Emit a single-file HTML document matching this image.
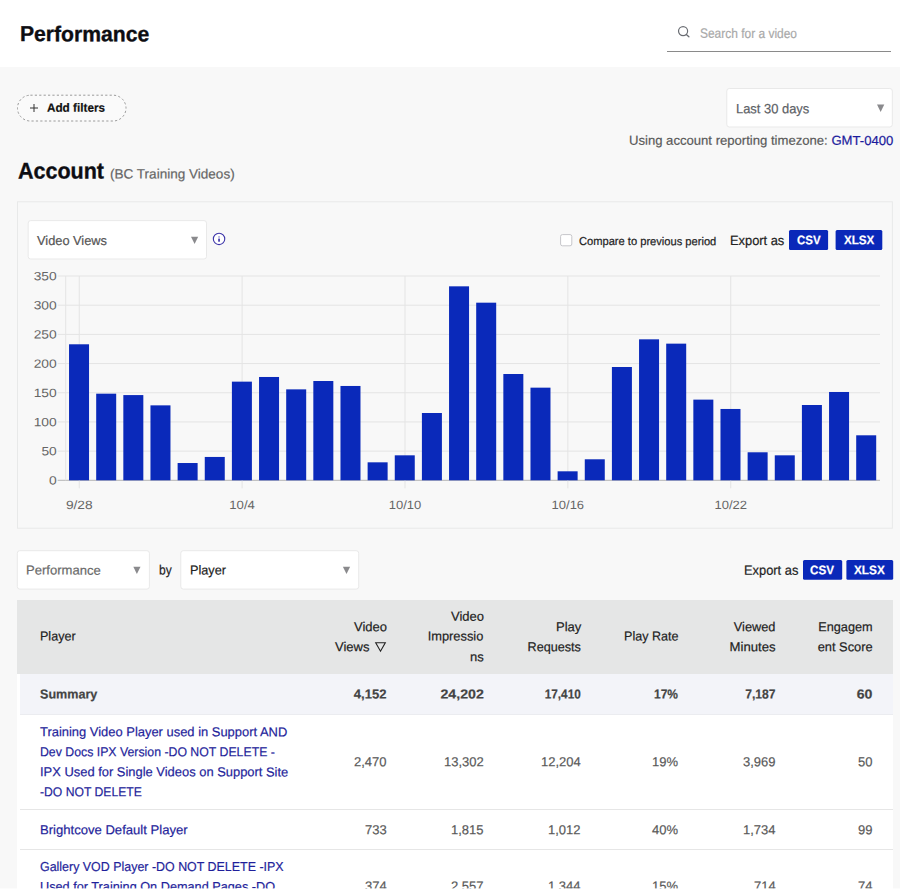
<!DOCTYPE html>
<html lang="en">
<head>
<meta charset="utf-8">
<title>Performance</title>
<style>
*{box-sizing:border-box;margin:0;padding:0}
html,body{width:900px;height:891px;overflow:hidden}
body{position:relative;background:#f8f8f8;font-family:"Liberation Sans",Arial,sans-serif;color:#222;font-size:13px}
.abs{position:absolute}
.x{position:absolute;white-space:nowrap;transform-origin:0 0;-webkit-text-stroke:.2px currentColor}
.x a{color:#1b1b9c;text-decoration:none}
#hdr{position:absolute;left:0;top:0;width:900px;height:67px;background:#fff}
#sline{position:absolute;left:667px;top:51px;width:224px;height:1px;background:#8a8a8a}
#tbl{position:absolute;left:17px;top:600px;width:876px;height:291px;background:#fff}
#th{position:absolute;left:0;top:0;width:876px;height:74px;background:#e5e6e6}
#sum{position:absolute;left:3px;top:74px;width:873px;height:41px;background:#f3f4f9}
.hl{position:absolute;left:3px;width:873px;height:1px;background:#e6e6e6}
#fade{position:absolute;left:0;top:888px;width:900px;height:3px;background:linear-gradient(rgba(255,255,255,.6) 0,rgba(255,255,255,.6) 1px,#fff 1px)}
</style>
</head>
<body>
<div id="hdr">
  <svg class="abs" style="left:676px;top:24px" width="16" height="16" viewBox="0 0 16 16"><circle cx="7.07" cy="7.1" r="4.55" fill="none" stroke="#6a6d73" stroke-width="1.2"/><path d="M10.3 10.4 L12.9 12.8" stroke="#6a6d73" stroke-width="1.3" stroke-linecap="round"/></svg>
  <div id="sline"></div>
</div>

<svg class="abs" style="left:16px;top:94px" width="112" height="28" viewBox="0 0 112 28"><rect x="1.5" y="1.2" width="108.5" height="25.8" rx="12.9" fill="#fafafa" stroke="#9a9a9a" stroke-width="1" stroke-dasharray="2.2 2.2"/></svg>
<svg class="abs" style="left:29px;top:103px" width="10" height="10" viewBox="0 0 10 10"><path d="M5 1v8M1 5h8" stroke="#333" stroke-width="1"/></svg>



<svg class="abs" style="left:0;top:0" width="900" height="891" viewBox="0 0 900 891"><rect x="17.50" y="201.80" width="874.90" height="326.40" rx="0" fill="none" stroke="#e8e9e9" stroke-width="1"/>
<rect x="726.80" y="88.50" width="165.50" height="38.50" rx="2.5" fill="#fff" stroke="#e9e9e9" stroke-width="1"/>
<path d="M877.00 104.60h7.30l-3.65 7.40z" fill="#8a8a8d"/>
<rect x="28.20" y="220.60" width="178.30" height="38.40" rx="2.5" fill="#fff" stroke="#e9e9e9" stroke-width="1"/>
<path d="M191.00 236.70h7.20l-3.60 7.20z" fill="#8a8a8d"/>
<rect x="17.30" y="550.70" width="132.10" height="38.40" rx="2.5" fill="#fff" stroke="#e9e9e9" stroke-width="1"/>
<path d="M133.30 566.80h7.20l-3.60 7.20z" fill="#8a8a8d"/>
<rect x="180.80" y="550.70" width="177.90" height="38.40" rx="2.5" fill="#fff" stroke="#e9e9e9" stroke-width="1"/>
<path d="M342.90 566.80h7.20l-3.60 7.20z" fill="#8a8a8d"/>
<rect x="560.60" y="234.60" width="11.20" height="11.20" rx="1.8" fill="#fff" stroke="#c6c6ca" stroke-width="1"/>
<rect x="789.00" y="230.00" width="39.10" height="19.90" rx="1.5" fill="#0a28b9"/>
<rect x="835.60" y="230.00" width="46.70" height="19.90" rx="1.5" fill="#0a28b9"/>
<rect x="803.00" y="560.00" width="39.20" height="19.80" rx="1.5" fill="#0a28b9"/>
<rect x="846.40" y="560.00" width="46.80" height="19.80" rx="1.5" fill="#0a28b9"/>
<circle cx="219.05" cy="238.9" r="5.7" fill="#fff" stroke="#3d35a9" stroke-width="1.1"/>
<rect x="218.2" y="238.6" width="1.7" height="3.1" fill="#3d35a9"/>
<rect x="218.2" y="236.3" width="1.7" height="1.3" fill="#3d35a9" opacity=".55"/></svg>
<svg id="chart" class="abs" style="left:0;top:260px" width="900" height="265" viewBox="0 260 900 265" font-family="'Liberation Sans',Arial,sans-serif" font-size="12" fill="#666"><rect x="57.7" y="479.80" width="822.3" height="1" fill="#b5b5b5"/>
<text x="49.0" y="484.50" transform="rotate(.05 49.0 484.50)" textLength="7.7" lengthAdjust="spacingAndGlyphs">0</text>
<rect x="57.7" y="450.61" width="822.3" height="1" fill="#e4e4e4"/>
<text x="41.4" y="455.31" transform="rotate(.05 41.4 455.31)" textLength="15.3" lengthAdjust="spacingAndGlyphs">50</text>
<rect x="57.7" y="421.43" width="822.3" height="1" fill="#e4e4e4"/>
<text x="33.7" y="426.13" transform="rotate(.05 33.7 426.13)" textLength="23.0" lengthAdjust="spacingAndGlyphs">100</text>
<rect x="57.7" y="392.24" width="822.3" height="1" fill="#e4e4e4"/>
<text x="33.7" y="396.94" transform="rotate(.05 33.7 396.94)" textLength="23.0" lengthAdjust="spacingAndGlyphs">150</text>
<rect x="57.7" y="363.06" width="822.3" height="1" fill="#e4e4e4"/>
<text x="33.7" y="367.76" transform="rotate(.05 33.7 367.76)" textLength="23.0" lengthAdjust="spacingAndGlyphs">200</text>
<rect x="57.7" y="333.87" width="822.3" height="1" fill="#e4e4e4"/>
<text x="33.7" y="338.57" transform="rotate(.05 33.7 338.57)" textLength="23.0" lengthAdjust="spacingAndGlyphs">250</text>
<rect x="57.7" y="304.69" width="822.3" height="1" fill="#e4e4e4"/>
<text x="33.7" y="309.39" transform="rotate(.05 33.7 309.39)" textLength="23.0" lengthAdjust="spacingAndGlyphs">300</text>
<rect x="57.7" y="275.50" width="822.3" height="1" fill="#e4e4e4"/>
<text x="33.7" y="280.20" transform="rotate(.05 33.7 280.20)" textLength="23.0" lengthAdjust="spacingAndGlyphs">350</text>
<rect x="65.20" y="276.0" width="1" height="204.3" fill="#e4e4e4"/>
<rect x="78.77" y="276.0" width="1" height="212.3" fill="#e4e4e4"/>
<text x="65.9" y="508.9" transform="rotate(.05 65.9 508.9)" textLength="26.7" lengthAdjust="spacingAndGlyphs">9/28</text>
<rect x="241.63" y="276.0" width="1" height="212.3" fill="#e4e4e4"/>
<text x="229.3" y="508.9" transform="rotate(.05 229.3 508.9)" textLength="25.6" lengthAdjust="spacingAndGlyphs">10/4</text>
<rect x="404.49" y="276.0" width="1" height="212.3" fill="#e4e4e4"/>
<text x="388.7" y="508.9" transform="rotate(.05 388.7 508.9)" textLength="32.5" lengthAdjust="spacingAndGlyphs">10/10</text>
<rect x="567.35" y="276.0" width="1" height="212.3" fill="#e4e4e4"/>
<text x="551.6" y="508.9" transform="rotate(.05 551.6 508.9)" textLength="32.5" lengthAdjust="spacingAndGlyphs">10/16</text>
<rect x="730.21" y="276.0" width="1" height="212.3" fill="#e4e4e4"/>
<text x="714.5" y="508.9" transform="rotate(.05 714.5 508.9)" textLength="32.5" lengthAdjust="spacingAndGlyphs">10/22</text>
<rect x="69.04" y="344.29" width="20.00" height="136.01" fill="#0a29ba"/>
<rect x="96.19" y="393.68" width="20.00" height="86.62" fill="#0a29ba"/>
<rect x="123.33" y="395.08" width="20.00" height="85.22" fill="#0a29ba"/>
<rect x="150.47" y="405.35" width="20.00" height="74.95" fill="#0a29ba"/>
<rect x="177.62" y="463.02" width="20.00" height="17.28" fill="#0a29ba"/>
<rect x="204.76" y="456.95" width="20.00" height="23.35" fill="#0a29ba"/>
<rect x="231.90" y="381.65" width="20.00" height="98.65" fill="#0a29ba"/>
<rect x="259.05" y="376.98" width="20.00" height="103.32" fill="#0a29ba"/>
<rect x="286.19" y="389.36" width="20.00" height="90.94" fill="#0a29ba"/>
<rect x="313.33" y="381.01" width="20.00" height="99.29" fill="#0a29ba"/>
<rect x="340.48" y="385.97" width="20.00" height="94.33" fill="#0a29ba"/>
<rect x="367.62" y="462.32" width="20.00" height="17.98" fill="#0a29ba"/>
<rect x="394.76" y="455.32" width="20.00" height="24.98" fill="#0a29ba"/>
<rect x="421.91" y="413.00" width="20.00" height="67.30" fill="#0a29ba"/>
<rect x="449.05" y="286.33" width="20.00" height="193.97" fill="#0a29ba"/>
<rect x="476.19" y="302.68" width="20.00" height="177.62" fill="#0a29ba"/>
<rect x="503.34" y="374.01" width="20.00" height="106.29" fill="#0a29ba"/>
<rect x="530.48" y="387.66" width="20.00" height="92.64" fill="#0a29ba"/>
<rect x="557.62" y="471.31" width="20.00" height="8.99" fill="#0a29ba"/>
<rect x="584.77" y="459.29" width="20.00" height="21.01" fill="#0a29ba"/>
<rect x="611.91" y="367.00" width="20.00" height="113.30" fill="#0a29ba"/>
<rect x="639.05" y="339.33" width="20.00" height="140.97" fill="#0a29ba"/>
<rect x="666.20" y="343.65" width="20.00" height="136.65" fill="#0a29ba"/>
<rect x="693.34" y="399.63" width="20.00" height="80.67" fill="#0a29ba"/>
<rect x="720.48" y="408.97" width="20.00" height="71.33" fill="#0a29ba"/>
<rect x="747.63" y="452.28" width="20.00" height="28.02" fill="#0a29ba"/>
<rect x="774.77" y="455.32" width="20.00" height="24.98" fill="#0a29ba"/>
<rect x="801.91" y="405.00" width="20.00" height="75.30" fill="#0a29ba"/>
<rect x="829.06" y="391.98" width="20.00" height="88.32" fill="#0a29ba"/>
<rect x="856.20" y="435.30" width="20.00" height="45.00" fill="#0a29ba"/>
<rect x="57.7" y="479.80" width="822.3" height="1" fill="#b0b0b0" opacity=".0"/></svg>


<div id="tbl">
  <div id="th"></div>
  <div id="sum"></div>
  <div class="hl" style="top:114px;background:#ebecf0"></div>
  <div class="hl" style="top:209px"></div>
  <div class="hl" style="top:249px"></div>
</div>
<svg class="abs" style="left:374px;top:640.5px" width="14" height="12" viewBox="0 0 14 12"><path d="M1.7 1.8h9.6L6.5 10.2z" fill="none" stroke="#222" stroke-width="1.1" stroke-linejoin="miter"/></svg>

<div id="txt" style="position:absolute;left:0;top:0;width:900px;height:891px;opacity:.999">
<div class="x" style="top:21px;font-size:21.5px;line-height:26px;color:#0d0d12;font-weight:700;left:20.00px;transform:translateY(0.10px) rotate(.05deg) scaleX(0.9836);-webkit-text-stroke:0.35px #0d0d12;">Performance</div>
<div class="x" style="top:25px;font-size:13.5px;line-height:16px;color:#a9a9a9;left:700.30px;transform:translateY(0.86px) rotate(.05deg) scaleX(0.8853);">Search for a video</div>
<div class="x" style="top:100px;font-size:12px;line-height:14px;color:#111;font-weight:700;left:47.00px;transform:translateY(0.80px) rotate(.05deg) scaleX(0.9774);">Add filters</div>
<div class="x" style="top:101px;font-size:13.4px;line-height:16px;color:#5c5f66;left:735.50px;transform:translateY(0.18px) rotate(.05deg) scaleX(0.9653);">Last 30 days</div>
<div class="x" style="top:132px;font-size:13px;line-height:16px;color:#5a5a5a;left:628.50px;transform:translateY(0.68px) rotate(.05deg) scaleX(1.0076);">Using account reporting timezone: <a>GMT-0400</a></div>
<div class="x" style="top:157px;font-size:22.6px;line-height:27px;color:#0d0d12;font-weight:700;left:17.70px;transform:translateY(0.40px) rotate(.05deg) scaleX(0.9516);-webkit-text-stroke:0.35px #0d0d12;">Account</div>
<div class="x" style="top:166px;font-size:13.5px;line-height:16px;color:#666;left:110.00px;transform:translateY(0.46px) rotate(.05deg) scaleX(1.0031);">(BC Training Videos)</div>
<div class="x" style="top:232px;font-size:13px;line-height:16px;color:#555;left:37.00px;transform:translateY(0.88px) rotate(.05deg) scaleX(0.9848);">Video Views</div>
<div class="x" style="top:234px;font-size:11.5px;line-height:14px;color:#222;left:578.70px;transform:translateY(0.07px) rotate(.05deg) scaleX(0.9674);">Compare to previous period</div>
<div class="x" style="top:232px;font-size:13.4px;line-height:16px;color:#222;left:730.30px;transform:translateY(0.88px) rotate(.05deg) scaleX(0.9597);">Export as</div>
<div class="x" style="top:233px;font-size:12.4px;line-height:15px;color:#fff;font-weight:700;left:796.50px;transform:translateY(0.34px) rotate(.05deg) scaleX(0.9261);">CSV</div>
<div class="x" style="top:233px;font-size:12.4px;line-height:15px;color:#fff;font-weight:700;left:843.60px;transform:translateY(0.34px) rotate(.05deg) scaleX(0.9390);">XLSX</div>
<div class="x" style="top:562px;font-size:13px;line-height:16px;color:#6a6a6a;left:26.20px;transform:translateY(0.58px) rotate(.05deg) scaleX(1.0037);">Performance</div>
<div class="x" style="top:562px;font-size:13.4px;line-height:16px;color:#222;left:158.50px;transform:translateY(0.38px) rotate(.05deg) scaleX(0.8971);">by</div>
<div class="x" style="top:562px;font-size:13px;line-height:16px;color:#222;left:189.80px;transform:translateY(0.58px) rotate(.05deg) scaleX(0.9767);">Player</div>
<div class="x" style="top:562px;font-size:13.4px;line-height:16px;color:#222;left:743.60px;transform:translateY(0.68px) rotate(.05deg) scaleX(0.9615);">Export as</div>
<div class="x" style="top:563px;font-size:12.4px;line-height:15px;color:#fff;font-weight:700;left:810.40px;transform:translateY(0.34px) rotate(.05deg) scaleX(0.9418);">CSV</div>
<div class="x" style="top:563px;font-size:12.4px;line-height:15px;color:#fff;font-weight:700;left:854.40px;transform:translateY(0.34px) rotate(.05deg) scaleX(0.9514);">XLSX</div>
<div class="x" style="top:628px;font-size:13px;line-height:16px;color:#222;left:40.40px;transform:translateY(0.58px) rotate(.05deg) scaleX(0.9658);">Player</div>
<div class="x" style="top:619px;font-size:13px;line-height:16px;color:#222;right:513.30px;transform-origin:100% 0;transform:translateY(0.18px) rotate(.05deg);">Video</div>
<div class="x" style="top:639px;font-size:13px;line-height:16px;color:#222;left:335.30px;transform:translateY(0.18px) rotate(.05deg);">Views</div>
<div class="x" style="top:608px;font-size:13px;line-height:16px;color:#222;right:416.30px;transform-origin:100% 0;transform:translateY(0.88px) rotate(.05deg);">Video</div>
<div class="x" style="top:628px;font-size:13px;line-height:16px;color:#222;right:416.30px;transform-origin:100% 0;transform:translateY(0.58px) rotate(.05deg) scaleX(0.9883);">Impressio</div>
<div class="x" style="top:649px;font-size:13px;line-height:16px;color:#222;right:416.30px;transform-origin:100% 0;transform:translateY(0.18px) rotate(.05deg);">ns</div>
<div class="x" style="top:619px;font-size:13px;line-height:16px;color:#222;right:319.00px;transform-origin:100% 0;transform:translateY(0.18px) rotate(.05deg);">Play</div>
<div class="x" style="top:639px;font-size:13px;line-height:16px;color:#222;right:319.00px;transform-origin:100% 0;transform:translateY(0.18px) rotate(.05deg) scaleX(0.9705);">Requests</div>
<div class="x" style="top:628px;font-size:13px;line-height:16px;color:#222;right:221.70px;transform-origin:100% 0;transform:translateY(0.58px) rotate(.05deg) scaleX(0.9632);">Play Rate</div>
<div class="x" style="top:619px;font-size:13px;line-height:16px;color:#222;right:124.70px;transform-origin:100% 0;transform:translateY(0.18px) rotate(.05deg) scaleX(0.9810);">Viewed</div>
<div class="x" style="top:639px;font-size:13px;line-height:16px;color:#222;right:124.70px;transform-origin:100% 0;transform:translateY(0.18px) rotate(.05deg) scaleX(1.0103);">Minutes</div>
<div class="x" style="top:619px;font-size:13px;line-height:16px;color:#222;right:27.30px;transform-origin:100% 0;transform:translateY(0.18px) rotate(.05deg) scaleX(0.9774);">Engagem</div>
<div class="x" style="top:639px;font-size:13px;line-height:16px;color:#222;right:27.30px;transform-origin:100% 0;transform:translateY(0.18px) rotate(.05deg) scaleX(0.9882);">ent Score</div>
<div class="x" style="top:686px;font-size:13px;line-height:16px;color:#444;font-weight:700;left:40.40px;transform:translateY(0.52px) rotate(.05deg) scaleX(0.9671);">Summary</div>
<div class="x" style="top:686px;font-size:13px;line-height:16px;color:#444;font-weight:700;right:513.30px;transform-origin:100% 0;transform:translateY(0.52px) rotate(.05deg) scaleX(1.0047);">4,152</div>
<div class="x" style="top:686px;font-size:13px;line-height:16px;color:#444;font-weight:700;right:416.30px;transform-origin:100% 0;transform:translateY(0.52px) rotate(.05deg) scaleX(1.0889);">24,202</div>
<div class="x" style="top:686px;font-size:13px;line-height:16px;color:#444;font-weight:700;right:319.00px;transform-origin:100% 0;transform:translateY(0.52px) rotate(.05deg) scaleX(0.9053);">17,410</div>
<div class="x" style="top:686px;font-size:13px;line-height:16px;color:#444;font-weight:700;right:222.00px;transform-origin:100% 0;transform:translateY(0.52px) rotate(.05deg) scaleX(0.9220);">17%</div>
<div class="x" style="top:686px;font-size:13px;line-height:16px;color:#444;font-weight:700;right:124.70px;transform-origin:100% 0;transform:translateY(0.52px) rotate(.05deg) scaleX(0.9310);">7,187</div>
<div class="x" style="top:686px;font-size:13px;line-height:16px;color:#444;font-weight:700;right:27.30px;transform-origin:100% 0;transform:translateY(0.52px) rotate(.05deg) scaleX(1.0851);">60</div>
<div class="x" style="top:724px;font-size:13px;line-height:16px;color:#1f1f9b;left:40.40px;transform:translateY(0.18px) rotate(.05deg) scaleX(0.9948);">Training Video Player used in Support AND</div>
<div class="x" style="top:744px;font-size:13px;line-height:16px;color:#1f1f9b;left:40.40px;transform:translateY(0.18px) rotate(.05deg) scaleX(0.9461);">Dev Docs IPX Version -DO NOT DELETE -</div>
<div class="x" style="top:764px;font-size:13px;line-height:16px;color:#1f1f9b;left:40.40px;transform:translateY(0.18px) rotate(.05deg) scaleX(0.9939);">IPX Used for Single Videos on Support Site</div>
<div class="x" style="top:784px;font-size:13px;line-height:16px;color:#1f1f9b;left:40.40px;transform:translateY(0.18px) rotate(.05deg) scaleX(0.9362);">-DO NOT DELETE</div>
<div class="x" style="top:822px;font-size:13px;line-height:16px;color:#1f1f9b;left:40.40px;transform:translateY(0.18px) rotate(.05deg) scaleX(1.0062);">Brightcove Default Player</div>
<div class="x" style="top:858px;font-size:13px;line-height:16px;color:#1f1f9b;left:40.40px;transform:translateY(0.88px) rotate(.05deg) scaleX(0.9562);">Gallery VOD Player -DO NOT DELETE -IPX</div>
<div class="x" style="top:878px;font-size:13px;line-height:16px;color:#1f1f9b;left:40.40px;transform:translateY(0.88px) rotate(.05deg) scaleX(0.9771);">Used for Training On Demand Pages -DO</div>
<div class="x" style="top:754px;font-size:13px;line-height:16px;color:#5a5a5a;right:513.30px;transform-origin:100% 0;transform:translateY(0.18px) rotate(.05deg);">2,470</div>
<div class="x" style="top:754px;font-size:13px;line-height:16px;color:#5a5a5a;right:416.30px;transform-origin:100% 0;transform:translateY(0.18px) rotate(.05deg);">13,302</div>
<div class="x" style="top:754px;font-size:13px;line-height:16px;color:#5a5a5a;right:319.00px;transform-origin:100% 0;transform:translateY(0.18px) rotate(.05deg);">12,204</div>
<div class="x" style="top:754px;font-size:13px;line-height:16px;color:#5a5a5a;right:222.00px;transform-origin:100% 0;transform:translateY(0.18px) rotate(.05deg);">19%</div>
<div class="x" style="top:754px;font-size:13px;line-height:16px;color:#5a5a5a;right:124.70px;transform-origin:100% 0;transform:translateY(0.18px) rotate(.05deg);">3,969</div>
<div class="x" style="top:754px;font-size:13px;line-height:16px;color:#5a5a5a;right:27.30px;transform-origin:100% 0;transform:translateY(0.18px) rotate(.05deg);">50</div>
<div class="x" style="top:822px;font-size:13px;line-height:16px;color:#5a5a5a;right:513.30px;transform-origin:100% 0;transform:translateY(0.18px) rotate(.05deg);">733</div>
<div class="x" style="top:822px;font-size:13px;line-height:16px;color:#5a5a5a;right:416.30px;transform-origin:100% 0;transform:translateY(0.18px) rotate(.05deg);">1,815</div>
<div class="x" style="top:822px;font-size:13px;line-height:16px;color:#5a5a5a;right:319.00px;transform-origin:100% 0;transform:translateY(0.18px) rotate(.05deg);">1,012</div>
<div class="x" style="top:822px;font-size:13px;line-height:16px;color:#5a5a5a;right:222.00px;transform-origin:100% 0;transform:translateY(0.18px) rotate(.05deg);">40%</div>
<div class="x" style="top:822px;font-size:13px;line-height:16px;color:#5a5a5a;right:124.70px;transform-origin:100% 0;transform:translateY(0.18px) rotate(.05deg);">1,734</div>
<div class="x" style="top:822px;font-size:13px;line-height:16px;color:#5a5a5a;right:27.30px;transform-origin:100% 0;transform:translateY(0.18px) rotate(.05deg);">99</div>
<div class="x" style="top:878px;font-size:13px;line-height:16px;color:#5a5a5a;right:513.30px;transform-origin:100% 0;transform:translateY(0.48px) rotate(.05deg);">374</div>
<div class="x" style="top:878px;font-size:13px;line-height:16px;color:#5a5a5a;right:416.30px;transform-origin:100% 0;transform:translateY(0.48px) rotate(.05deg);">2,557</div>
<div class="x" style="top:878px;font-size:13px;line-height:16px;color:#5a5a5a;right:319.00px;transform-origin:100% 0;transform:translateY(0.48px) rotate(.05deg);">1,344</div>
<div class="x" style="top:878px;font-size:13px;line-height:16px;color:#5a5a5a;right:222.00px;transform-origin:100% 0;transform:translateY(0.48px) rotate(.05deg);">15%</div>
<div class="x" style="top:878px;font-size:13px;line-height:16px;color:#5a5a5a;right:124.70px;transform-origin:100% 0;transform:translateY(0.48px) rotate(.05deg);">714</div>
<div class="x" style="top:878px;font-size:13px;line-height:16px;color:#5a5a5a;right:27.30px;transform-origin:100% 0;transform:translateY(0.48px) rotate(.05deg);">74</div>
</div>
<div id="fade"></div>
</body>
</html>
